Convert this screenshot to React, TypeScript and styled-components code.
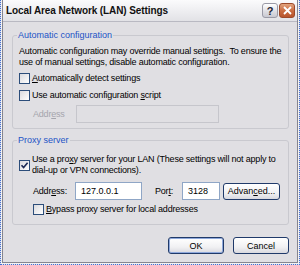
import React from 'react';
import styled, { createGlobalStyle } from 'styled-components';

const GlobalStyle = createGlobalStyle`
  html, body {
    margin: 0;
    padding: 0;
    background: #e0dfe3;
  }
  body {
    font-family: "Liberation Sans", Arial, sans-serif;
    font-size: 9px;
    color: #000;
  }
`;

const Window = styled.div`
  width: 300px;
  height: 265px;
  box-sizing: border-box;
  border: 1px dotted #3f6fd8;
  border-top: none;
  display: flex;
  flex-direction: column;
`;

const Frame = styled.div`
  flex: 1;
  display: flex;
  flex-direction: column;
  border: 1px solid #f2f2f4;
  border-top: none;
`;

const Inner = styled.div`
  flex: 1;
  display: flex;
  flex-direction: column;
  border: 1px solid #85858f;
  border-top: none;
  background: #e0dfe3;
`;

const TitleBar = styled.div`
  height: 21px;
  display: flex;
  align-items: center;
  padding: 0 2px 0 3px;
  border-bottom: 1px solid #b9b9c2;
  background: linear-gradient(#fbfbfc, #ececef 60%, #e2e2e6);
`;

const Title = styled.span`
  flex: 1;
  font-weight: bold;
  font-size: 10px;
  letter-spacing: -0.1px;
  color: #111;
`;

const TitleButton = styled.div<{ $close?: boolean }>`
  width: 16px;
  height: 15px;
  margin-left: 1px;
  border-radius: 3px;
  display: flex;
  align-items: center;
  justify-content: center;
  box-sizing: border-box;
  border: 1px solid ${({ $close }) => ($close ? '#9c4a2a' : '#9a9aa6')};
  background: ${({ $close }) => ($close
    ? 'linear-gradient(#e2a47e, #c96a3f 55%, #b8552c)'
    : 'linear-gradient(#ffffff, #dcdce2 60%, #c9c9d1)')};
  color: #223;
  font-weight: bold;
  font-size: 11px;
`;

const Body = styled.div`
  flex: 1;
  display: flex;
  flex-direction: column;
  padding: 8px 8px 0 9px;
  gap: 6px;
`;

const Group = styled.fieldset<{ $pad: string }>`
  margin: 0;
  padding: ${({ $pad }) => $pad};
  border: 1px solid #c9c9cf;
  border-radius: 3px;
  min-width: 0;
  display: flex;
  flex-direction: column;
`;

const Legend = styled.legend`
  padding: 0 1px;
  margin-left: -2px;
  line-height: 11px;
  color: #2253c6;
`;

const Text = styled.div`
  line-height: 11px;
  white-space: nowrap;
  letter-spacing: -0.2px;
`;

const CheckRow = styled.div<{ $indent?: number; $top?: number }>`
  display: flex;
  align-items: center;
  margin-left: ${({ $indent }) => $indent ?? 0}px;
  margin-top: ${({ $top }) => $top ?? 0}px;
`;

const Box = styled.span`
  flex: none;
  width: 11px;
  height: 11px;
  box-sizing: border-box;
  border: 1px solid #2c4d7a;
  background: linear-gradient(135deg, #dadade, #ffffff);
  margin-right: 2px;
  display: flex;
  align-items: center;
  justify-content: center;
`;

const Label = styled.span<{ $muted?: boolean }>`
  white-space: nowrap;
  letter-spacing: -0.2px;
  line-height: 11px;
  color: ${({ $muted }) => ($muted ? '#a5a5ad' : '#000')};
`;

const FieldRow = styled.div<{ $top?: number }>`
  display: flex;
  align-items: center;
  margin-top: ${({ $top }) => $top ?? 0}px;
  padding-left: 14px;
`;

const FieldLabel = styled(Label)<{ $w: number }>`
  width: ${({ $w }) => $w}px;
`;

const Input = styled.div<{ $w: number; $disabled?: boolean }>`
  width: ${({ $w }) => $w}px;
  height: 18px;
  box-sizing: border-box;
  padding: 0 5px;
  display: flex;
  align-items: center;
  border: 1px solid ${({ $disabled }) => ($disabled ? '#c6c6cc' : '#8fa6c6')};
  background: ${({ $disabled }) => ($disabled ? '#e0dfe3' : '#fff')};
  white-space: nowrap;
`;

const Button = styled.div<{ $w: number; $default?: boolean }>`
  width: ${({ $w }) => $w}px;
  height: 17px;
  box-sizing: border-box;
  border: 1px solid #203a6a;
  border-radius: 3px;
  display: flex;
  align-items: center;
  justify-content: center;
  background: linear-gradient(#ffffff, #f1f1f3 60%, #d9d9df);
  box-shadow: ${({ $default }) => ($default ? 'inset 0 0 0 1px #8fa9dc' : 'none')};
  white-space: nowrap;
`;

const Footer = styled.div`
  display: flex;
  justify-content: flex-end;
  gap: 9px;
  padding: 6px 0 0;
`;

const Check = () => (
  <svg width="9" height="9" viewBox="0 0 9 9">
    <path d="M1.5 4.2 L3.6 6.6 L7.6 1.8" fill="none" stroke="#1b2a56" strokeWidth="1.6" />
  </svg>
);

const App = () => (
  <>
    <GlobalStyle />
    <Window>
      <Frame>
        <Inner>
          <TitleBar>
            <Title>Local Area Network (LAN) Settings</Title>
            <TitleButton>?</TitleButton>
            <TitleButton $close>
              <svg width="9" height="9" viewBox="0 0 9 9">
                <path d="M1 1 L8 8 M8 1 L1 8" stroke="#fff" strokeWidth="1.8" />
              </svg>
            </TitleButton>
          </TitleBar>
          <Body>
            <Group $pad="5px 6px 5px">
              <Legend>Automatic configuration</Legend>
              <Text>
                Automatic configuration may override manual settings.&nbsp; To ensure the
                <br />
                use of manual settings, disable automatic configuration.
              </Text>
              <CheckRow $top={5}>
                <Box />
                <Label><u>A</u>utomatically detect settings</Label>
              </CheckRow>
              <CheckRow $top={6}>
                <Box />
                <Label>Use automatic configuration <u>s</u>cript</Label>
              </CheckRow>
              <FieldRow $top={4}>
                <FieldLabel $w={43} $muted>Addr<u>e</u>ss</FieldLabel>
                <Input $w={143} $disabled />
              </FieldRow>
            </Group>
            <Group $pad="8px 6px 9px">
              <Legend>Proxy server</Legend>
              <CheckRow>
                <Box><Check /></Box>
                <Label>
                  Use a pro<u>x</u>y server for your LAN (These settings will not apply to
                  <br />
                  dial-up or VPN connections).
                </Label>
              </CheckRow>
              <FieldRow $top={6}>
                <FieldLabel $w={42}>Addr<u>e</u>ss:</FieldLabel>
                <Input $w={67}>127.0.0.1</Input>
                <FieldLabel $w={27} style={{ marginLeft: 13 }}>Por<u>t</u>:</FieldLabel>
                <Input $w={38}>3128</Input>
                <Button $w={57} style={{ marginLeft: 3 }}>Advan<u>c</u>ed...</Button>
              </FieldRow>
              <CheckRow $indent={14} $top={4}>
                <Box />
                <Label><u>B</u>ypass proxy server for local addresses</Label>
              </CheckRow>
            </Group>
            <Footer>
              <Button $w={56} $default>OK</Button>
              <Button $w={56}>Cancel</Button>
            </Footer>
          </Body>
        </Inner>
      </Frame>
    </Window>
  </>
);

export default App;
